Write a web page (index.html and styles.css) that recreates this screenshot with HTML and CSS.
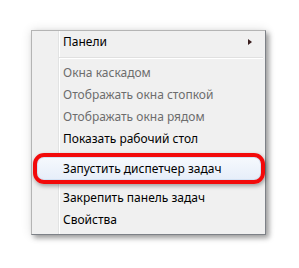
FILE: index.html
```html
<!DOCTYPE html>
<html lang="ru">
<head>
<meta charset="utf-8">
<link rel="stylesheet" href="styles.css">
</head>
<body>
<div class="stage">
  <div class="menu">
    <div class="item has-sub"><span>Панели</span><span class="arrow"></span></div>
    <div class="sep"></div>
    <div class="item disabled">Окна каскадом</div>
    <div class="item disabled">Отображать окна стопкой</div>
    <div class="item disabled">Отображать окна рядом</div>
    <div class="item">Показать рабочий стол</div>
    <div class="item marked">Запустить диспетчер задач</div>
    <div class="item">Закрепить панель задач</div>
    <div class="item">Свойства</div>
  </div>
</div>
</body>
</html>
```
FILE: styles.css
```css
html, body {
  margin: 0;
  padding: 0;
  background: #ffffff;
}
.stage {
  width: 299px;
  height: 268px;
  padding: 30px 0 0 31px;
  box-sizing: border-box;
}
.menu {
  width: 235px;
  height: 205px;
  box-sizing: border-box;
  border: 1px solid #b4b4b4;
  border-right-color: #7d8187;
  border-bottom-color: #7d8187;
  background: linear-gradient(to right, #f0f0f0 26px, #e2e3e3 26px, #e2e3e3 27px, #ffffff 27px, #ffffff 28px, #f0f0f0 28px);
  box-shadow: 0 0 10px rgba(0, 0, 0, 0.12), 3px 3px 5px rgba(0, 0, 0, 0.35);
  display: flex;
  flex-direction: column;
  font-family: "Noto Sans", "Open Sans", sans-serif;
  font-size: 12px;
  color: #000000;
}
.item {
  height: 22px;
  line-height: 22px;
  padding-left: 31px;
  white-space: nowrap;
  display: flex;
  align-items: center;
}
.has-sub {
  justify-content: space-between;
  padding-right: 13px;
}
.arrow {
  width: 0;
  height: 0;
  border-top: 3.5px solid transparent;
  border-bottom: 3.5px solid transparent;
  border-left: 4px solid #3a1e1e;
}
.sep {
  height: 9px;
  margin-left: 27px;
  margin-right: 2px;
  background: linear-gradient(to bottom, transparent 4px, #e0e0e0 4px, #e0e0e0 5px, #ffffff 5px, #ffffff 6px, transparent 6px);
}
.disabled {
  color: #6d6d6d;
}
.marked {
  height: 31px;
  line-height: 23px;
  box-sizing: border-box;
  margin: 3px 0 3px 1px;
  width: 232px;
  padding-left: 26px;
  border: 4px solid #f20a0a;
  border-radius: 11px;
  background: linear-gradient(to bottom, #f6f9fd, #e6eef9);
  box-shadow: 1px 2px 4px rgba(0, 0, 0, 0.35), inset 0 0 0 1px #d3e2f4;
}
```
